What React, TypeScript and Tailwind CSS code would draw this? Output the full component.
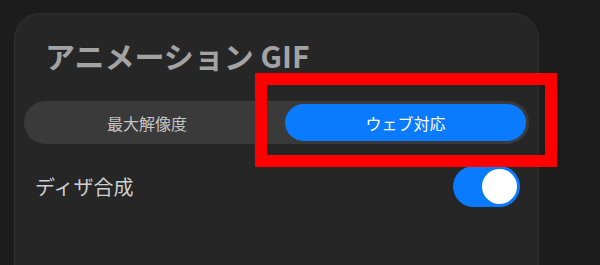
import { useState } from 'react';

const font = { fontFamily: '"Noto Sans CJK JP", "Noto Sans", sans-serif' };

const App = () => {
  const [mode, setMode] = useState<'max' | 'web'>('web');
  const [dither, setDither] = useState(true);

  return (
    <div className="relative w-[600px] h-[265px] overflow-hidden bg-[#1c1c1c] pt-[13px] pl-[14px]" style={font}>
      <div className="w-[525px] h-[290px] rounded-[26px] bg-[#262626] border border-[#303030] px-[9px]">
        <h1 className="mt-[21px] ml-[21px] text-[30px] leading-[40px] font-bold text-[#a3a3a3]">
          アニメーション GIF
        </h1>

        <div className="mt-[26px] h-[43px] rounded-full bg-[#3a3a3a] p-[3px] flex">
          <button
            type="button"
            onClick={() => setMode('max')}
            className={`flex-1 rounded-full text-[16px] pr-[18px] ${mode === 'max' ? 'bg-[#0a7aff] text-white' : 'text-[#c4c4c4]'}`}
          >
            最大解像度
          </button>
          <button
            type="button"
            onClick={() => setMode('web')}
            className={`w-[241px] rounded-full text-[16px] ${mode === 'web' ? 'bg-[#0a7aff] text-white' : 'text-[#c4c4c4]'}`}
          >
            ウェブ対応
          </button>
        </div>

        <div className="mt-[22px] flex items-center justify-between pl-[11px] pr-[9px]">
          <span className="text-[20px] text-[#cfcfcf]">ディザ合成</span>
          <button
            type="button"
            onClick={() => setDither(!dither)}
            className={`w-[67px] h-[41px] rounded-full p-[3px] flex ${dither ? 'bg-[#0a7aff] justify-end' : 'bg-[#4a4a4a] justify-start'}`}
          >
            <span className="w-[35px] h-[35px] rounded-full bg-white block" />
          </button>
        </div>
      </div>

      <div className="absolute left-[255px] top-[73px] w-[302px] h-[94px] border-[12px] border-[#ff0000] pointer-events-none" />
    </div>
  );
};

export default App;
